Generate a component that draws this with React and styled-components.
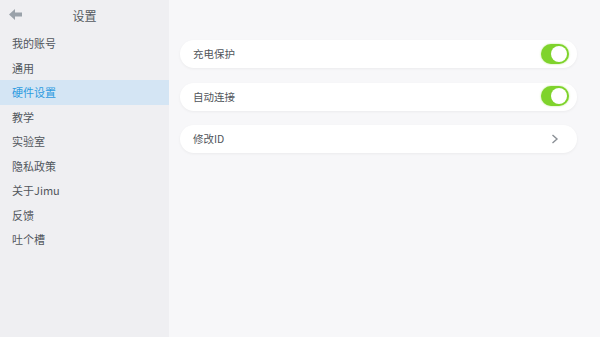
import React from 'react'
import styled, { createGlobalStyle } from 'styled-components'

const GlobalStyle = createGlobalStyle`
  html, body {
    margin: 0;
    padding: 0;
  }
  body {
    font-family: "Noto Sans CJK SC", "Noto Sans", sans-serif;
    -webkit-font-smoothing: antialiased;
  }
`

const Page = styled.div`
  display: flex;
  width: 600px;
  height: 337px;
  overflow: hidden;
`

const Sidebar = styled.div`
  width: 169px;
  flex-shrink: 0;
  background-color: #efeff2;
  display: flex;
  flex-direction: column;
`

const Header = styled.div`
  height: 31px;
  position: relative;
  display: flex;
  align-items: center;
  justify-content: center;
  font-size: 12px;
  color: #555a60;
`

const Back = styled.svg`
  position: absolute;
  left: 9px;
  top: 9px;
  width: 14px;
  height: 11px;
`

const Item = styled.div`
  height: 24.5px;
  display: flex;
  align-items: center;
  padding-left: 12px;
  font-size: 11px;
  color: ${p => (p.active ? '#2d9be0' : '#51565c')};
  background-color: ${p => (p.active ? '#d4e5f4' : 'transparent')};
`

const Main = styled.div`
  flex: 1;
  background-color: #f7f7f9;
  padding: 40px 23px 0 11px;
  display: flex;
  flex-direction: column;
  gap: 14.5px;
`

const Card = styled.div`
  height: 28px;
  border-radius: 14px;
  background-color: #fff;
  box-shadow: 0 1px 3px rgba(0, 0, 0, 0.05);
  display: flex;
  align-items: center;
  justify-content: space-between;
  padding: 0 8px 1px 13px;
  box-sizing: border-box;
  font-size: 10.5px;
  color: #50555b;
`

const Toggle = styled.div`
  width: 28px;
  height: 20px;
  border-radius: 10px;
  background-color: #7fd32c;
  box-shadow: 0 0 2px rgba(126, 211, 44, 0.6);
  display: flex;
  align-items: center;
  justify-content: flex-end;
  padding: 0 2px;
  box-sizing: border-box;
`

const Knob = styled.div`
  width: 16px;
  height: 16px;
  border-radius: 50%;
  background-color: #fff;
`

const Chevron = styled.svg`
  width: 8px;
  height: 10px;
  margin-right: 10px;
`

const menu = ['我的账号', '通用', '硬件设置', '教学', '实验室', '隐私政策', '关于Jimu', '反馈', '吐个槽']

export default function App() {
  return (
    <>
      <GlobalStyle />
      <Page>
        <Sidebar>
          <Header>
            <Back viewBox="0 0 14 11">
              <path d="M0 5.5 L6 0 L6 3.5 L13 3.5 L13 7.5 L6 7.5 L6 11 Z" fill="#9aa2aa" />
            </Back>
            设置
          </Header>
          {menu.map((m, i) => (
            <Item key={i} active={m === '硬件设置'}>
              {m}
            </Item>
          ))}
        </Sidebar>
        <Main>
          <Card>
            充电保护
            <Toggle>
              <Knob />
            </Toggle>
          </Card>
          <Card>
            自动连接
            <Toggle>
              <Knob />
            </Toggle>
          </Card>
          <Card>
            修改ID
            <Chevron viewBox="0 0 8 10">
              <path d="M1.5 1 L6 5 L1.5 9" fill="none" stroke="#8a8f95" strokeWidth="1.4" />
            </Chevron>
          </Card>
        </Main>
      </Page>
    </>
  )
}
